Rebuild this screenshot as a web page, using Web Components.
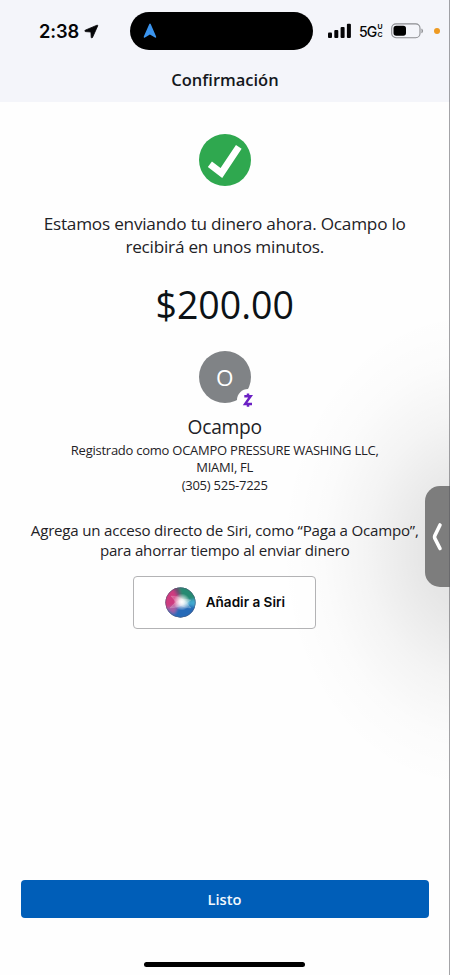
<!DOCTYPE html>
<html lang="es">
<head>
<meta charset="utf-8">
<title>Confirmación</title>
<style>
body{margin:0;background:#fefefe}
</style>
</head>
<body>
<confirm-screen></confirm-screen>
<script>
const define = (name, html) => customElements.define(name, class extends HTMLElement {
  constructor() {
    super();
    this.attachShadow({mode: 'open'}).innerHTML = html;
  }
});

define('status-bar', `
<style>
:host{display:flex;align-items:center;height:38px;padding-top:12px;font-family:Inter,"Liberation Sans",sans-serif;color:#050507}
.time{font-size:18.3px;font-weight:600;letter-spacing:-.1px;margin-left:39px;width:41px;line-height:22px;white-space:nowrap}
.loc{margin:0 0 0 4px;width:15px;height:15px}
.island{width:183px;height:38px;border-radius:19px;background:#000;margin-left:30.5px;display:flex;align-items:center}
.island svg{margin-left:13px}
.bars{margin-left:15px}
.net{font-size:14px;font-weight:500;letter-spacing:-1px;margin-left:7.5px;width:18.5px;white-space:nowrap}
.uc{display:flex;flex-direction:column;font:700 7px/8px "Liberation Sans",sans-serif;width:6px}
.bat{margin-left:7.5px}
.dot{width:6px;height:6px;border-radius:50%;background:#ee9a22;margin-left:10px}
svg{display:block;flex:none}
div,span{flex:none}
</style>
<span class="time">2:38</span>
<svg class="loc" viewBox="0 0 15 15"><path d="M13 1.2 1.2 6.2Q.2 7 1.3 7.6L6.9 8 7.2 13.3Q7.6 14.6 8.5 13.5L13.7 1.9Q14 .9 13 1.2Z" fill="#050507" stroke="#050507" stroke-width=".8" stroke-linejoin="round"/></svg>
<div class="island"><svg width="14" height="16" viewBox="0 0 14 16"><path d="M6.2 1.2 .8 13.4Q.4 15.4 2 14.6L6.9 11.4 12 14.6Q13.6 15.2 13.1 13.4L7.8 1.2Q7-.2 6.2 1.2Z" fill="#3b94ee"/></svg></div>
<svg class="bars" width="24" height="16" viewBox="0 0 24 16"><g fill="#050507"><rect x="0" y="9.5" width="4" height="5.5" rx="1"/><rect x="6.3" y="7" width="4" height="8" rx="1"/><rect x="12.6" y="4" width="4" height="11" rx="1"/><rect x="18.9" y=".7" width="4" height="14.3" rx="1"/></g></svg>
<span class="net">5G</span><div class="uc"><span>U</span><span>C</span></div>
<svg class="bat" width="33" height="16" viewBox="0 0 33 16"><rect x=".7" y=".9" width="28.3" height="13.8" rx="4.3" fill="none" stroke="#8b8c90" stroke-width="1.1"/><rect x="2.5" y="2.8" width="12.5" height="10" rx="2.7" fill="#000"/><path d="M30.8 5.8q1.8 2.1 0 4.3z" fill="#77787c" stroke="#77787c" stroke-width=".4"/></svg>
<div class="dot"></div>`);

define('title-bar', `
<style>
:host{display:flex;justify-content:center;align-items:center;box-sizing:border-box;height:52px;padding-top:7px;font:600 16.5px/22px "Open Sans",sans-serif;color:#15181c}
</style><slot></slot>`);

define('success-mark', `
<style>:host{display:block;width:52px;height:52px}svg{display:block}</style>
<svg width="52" height="52" viewBox="0 0 52 52"><circle cx="26" cy="26" r="26" fill="#2fa84f"/><path d="M10.9 30.2 22.4 39 39.8 12.8" fill="none" stroke="#fff" stroke-width="6.8"/></svg>`);

define('contact-avatar', `
<style>
:host{display:block;position:relative;width:52px;height:52px;border-radius:50%;background:#808386;color:#fff;font:400 22.5px/53px "Open Sans",sans-serif;text-align:center}
svg{position:absolute;left:38px;top:38px}
</style><slot></slot>
<svg width="22" height="22" viewBox="0 0 22 22"><circle cx="11" cy="11" r="11" fill="#fefefe"/><path d="M7.3 7.3H13.6L8.2 14.9H15M11 4.6V7.3M11 14.9V17.8" fill="none" stroke="#6b20c4" stroke-width="2.5"/></svg>`);

define('siri-button', `
<style>
:host{display:flex;align-items:center;box-sizing:border-box;width:183px;height:53px;border:1px solid #b3b3b5;border-radius:4px;background:rgba(255,255,255,.65);padding-left:30.5px;gap:10px;font:600 13.55px/20px Inter,sans-serif;color:#08090b;white-space:nowrap}
svg{display:block;flex:none}
</style>
<svg width="31" height="31" viewBox="0 0 31 31">
<defs>
<clipPath id="c"><circle cx="15.5" cy="15.5" r="15"/></clipPath>
<filter id="b" x="-50%" y="-50%" width="200%" height="200%"><feGaussianBlur stdDeviation="1.7"/></filter>
<radialGradient id="g"><stop offset="0" stop-color="#fff"/><stop offset=".3" stop-color="#fff" stop-opacity=".85"/><stop offset="1" stop-color="#fff" stop-opacity="0"/></radialGradient>
</defs>
<g clip-path="url(#c)"><rect width="31" height="31" fill="#3a5a88"/>
<g filter="url(#b)"><path d="M9 -4H36V15L17 16Z" fill="#278a72"/><path d="M-4 6 7 -1 17 15 8 24-4 24Z" fill="#cf3b7f"/><path d="M16 15 35 11V21L23 22Z" fill="#43a9cf"/><path d="M-3 24 16 17 34 20 27 36H3Z" fill="#266bb8"/><path d="M0 21 14 17 9 27Z" fill="#a75fa5"/><path d="M6 -2H13L17 12Z" fill="#67486c"/></g>
<circle cx="16.8" cy="15" r="8.5" fill="url(#g)"/><path d="M6 9Q17 8 26 21Q15 22 6 9M5 21Q13 10 26 13Q18 20 5 21" fill="#fff" fill-opacity=".2" stroke="#fff" stroke-opacity=".2" stroke-width=".6"/></g>
<circle cx="15.5" cy="15.5" r="14.8" fill="none" stroke="#55566f" stroke-opacity=".5" stroke-width=".8"/></svg>
<span><slot></slot></span>`);

define('primary-button', `
<style>:host{display:flex;align-items:center;justify-content:center;height:38px;border-radius:4px;background:#005eb8;color:#f2f8fd;font:600 14.7px/20px "Open Sans",sans-serif}</style><slot></slot>`);

define('side-handle', `
<style>:host{display:flex;align-items:center;width:25px;height:101px;border-radius:15px 0 0 15px;background:#7d7d7d}svg{display:block;margin-left:7px}</style>
<svg width="12" height="30" viewBox="0 0 12 30"><path d="M8 3 2.8 13.7Q2.3 15 2.8 16.3L8 26.5" fill="none" stroke="#fff" stroke-width="3.6" stroke-linecap="round"/></svg>`);

define('confirm-screen', `
<style>
:host{display:flex;flex-direction:column;position:relative;box-sizing:border-box;width:450px;height:975px;overflow:hidden;color:#1e2226;font-family:"Open Sans",sans-serif;
background:radial-gradient(ellipse 190px 240px at 470px 550px,rgba(0,0,0,.12) 0,rgba(0,0,0,.095) 25%,rgba(0,0,0,.04) 55%,rgba(0,0,0,.012) 78%,transparent 100%),#fefefe}
header{background:#f4f5fa;height:102px;flex:none}
main{display:flex;flex-direction:column;align-items:center;text-align:center;white-space:nowrap;flex:1;padding-right:.6px}
p,h1,h2{margin:0;font-weight:400}
success-mark{margin-top:32px}
.msg{font-size:17.2px;letter-spacing:-.23px;line-height:23px;margin-top:26.4px}
h1{font-size:37.5px;line-height:52px;margin-top:20.6px;color:#0c1216}
contact-avatar{margin-top:20px}
h2{font-size:19.2px;letter-spacing:-.25px;line-height:26px;margin-top:11px}
.reg{font-size:13px;letter-spacing:-.25px;line-height:17.5px;margin-top:1.8px}
.tip{font-size:15.1px;letter-spacing:-.21px;line-height:20px;margin-top:25.7px}
siri-button{margin-top:15.6px}
footer{display:flex;flex-direction:column;align-items:center;height:95px;flex:none}
primary-button{width:408px;margin-right:1px}
.home{width:161px;height:5px;border-radius:3px;background:#000;margin:43.5px 1px 0 0}
side-handle{position:absolute;right:0;top:486px}
.edge{position:absolute;right:0;top:0;width:1px;height:100%;background:rgba(90,90,94,.55)}
</style>
<header><status-bar></status-bar><title-bar>Confirmación</title-bar></header>
<main>
<success-mark></success-mark>
<p class="msg">Estamos enviando tu dinero ahora. Ocampo lo<br>recibirá en unos minutos.</p>
<h1>$200.00</h1>
<contact-avatar>O</contact-avatar>
<h2>Ocampo</h2>
<p class="reg">Registrado como OCAMPO PRESSURE WASHING LLC,<br>MIAMI, FL<br>(305) 525-7225</p>
<p class="tip">Agrega un acceso directo de Siri, como “Paga a Ocampo”,<br>para ahorrar tiempo al enviar dinero</p>
<siri-button>Añadir a Siri</siri-button>
</main>
<footer><primary-button>Listo</primary-button><div class="home"></div></footer>
<side-handle></side-handle><div class="edge"></div>`);
</script>
</body>
</html>
